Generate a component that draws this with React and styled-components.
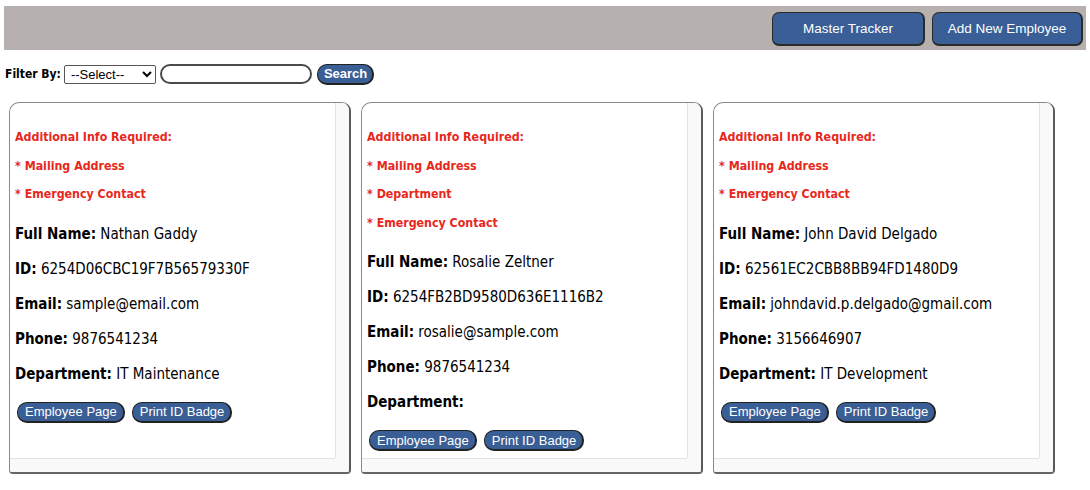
import React from "react";
import styled, { createGlobalStyle } from "styled-components";

const blue = "#3a5e96";
const cardFont = `"DejaVu Sans Condensed", "DejaVu Sans", sans-serif`;
const btnFont = `"Liberation Sans", Arial, sans-serif`;

const GlobalStyle = createGlobalStyle`
  body {
    margin: 0;
    background: #fff;
    font-family: ${cardFont};
    color: #000;
  }
`;

const Page = styled.div`
  padding: 6px 4px 0;
`;

const Header = styled.div`
  height: 44px;
  background: #b6b1ae;
  display: flex;
  justify-content: flex-end;
  align-items: center;
  gap: 7px;
  padding-right: 3px;
`;

const HeaderButton = styled.button`
  width: ${({ w }) => w}px;
  height: 34px;
  margin-top: 1px;
  background: ${blue};
  color: #fff;
  font-family: ${btnFont};
  font-size: 13.5px;
  border: 1px solid #2a2a2a;
  border-width: 1px 2px 2px 1px;
  border-radius: 7px;
  cursor: pointer;
`;

const FilterBar = styled.div`
  display: flex;
  align-items: center;
  margin-top: 14px;
  padding-left: 1px;
  height: 20px;
`;

const FilterLabel = styled.span`
  font-weight: bold;
  font-size: 12px;
  margin-right: 3px;
`;

const Select = styled.select`
  width: 92px;
  height: 19px;
  font-family: ${btnFont};
  font-size: 13px;
  border: 1px solid #555;
  border-radius: 2px;
  background: #fff;
  padding: 0 0 0 2px;
  margin-right: 4px;
`;

const SearchInput = styled.input`
  box-sizing: border-box;
  width: 152px;
  height: 20px;
  border: 2px solid #4a4a4a;
  border-radius: 10px;
  margin-right: 5px;
  outline: none;
`;

const PillButton = styled.button`
  height: ${({ h }) => h || 21}px;
  background: ${blue};
  color: #fff;
  font-family: ${btnFont};
  font-size: 13px;
  font-weight: ${({ bold }) => (bold ? "bold" : "normal")};
  border: 1px solid #222;
  border-width: 1px 2px 2px 1px;
  border-radius: 10px;
  padding: 0 ${({ pr }) => pr ?? 6}px 0 ${({ pl }) => pl ?? 7}px;
  cursor: pointer;
  line-height: 15px;
`;

const CardRow = styled.div`
  display: flex;
  gap: 10px;
  margin-top: 18px;
  padding-left: 5px;
`;

const Card = styled.div`
  box-sizing: border-box;
  width: 342px;
  height: 372px;
  display: grid;
  grid-template-columns: 1fr 14px;
  grid-template-rows: 1fr 14px;
  overflow: hidden;
  border: 1px solid #8a8a8a;
  border-right: 2px solid #5a5a5a;
  border-bottom: 2px solid #666;
  border-radius: 10px 9px 4px 4px;
  background: #fff;
`;

const Content = styled.div`
  padding: 14px 5px 0;
  overflow: hidden;
`;

const VTrack = styled.div`
  background: #f9f9f9;
  border-left: 1px solid #e3e3e3;
`;

const HTrack = styled.div`
  background: #f9f9f9;
  border-top: 1px solid #e3e3e3;
`;

const Corner = styled.div`
  background: #f9f9f9;
`;

const Note = styled.p`
  margin: 13px 0;
  font-size: 12.3px;
  line-height: 15.5px;
  font-weight: bold;
  color: #e8271b;
  &:last-child {
    margin-bottom: 22px;
  }
`;

const Field = styled.p`
  margin: 16px 0;
  font-size: 15px;
  line-height: 19px;
  white-space: nowrap;
  b {
    font-weight: bold;
  }
`;

const Actions = styled.div`
  display: flex;
  gap: 7px;
  margin-top: 18px;
  padding-left: 2px;
`;

const employees = [
  {
    missing: ["Mailing Address", "Emergency Contact"],
    name: "Nathan Gaddy",
    id: "6254D06CBC19F7B56579330F",
    email: "sample@email.com",
    phone: "9876541234",
    dept: "IT Maintenance",
  },
  {
    missing: ["Mailing Address", "Department", "Emergency Contact"],
    name: "Rosalie Zeltner",
    id: "6254FB2BD9580D636E1116B2",
    email: "rosalie@sample.com",
    phone: "9876541234",
    dept: "",
  },
  {
    missing: ["Mailing Address", "Emergency Contact"],
    name: "John David Delgado",
    id: "62561EC2CBB8BB94FD1480D9",
    email: "johndavid.p.delgado@gmail.com",
    phone: "3156646907",
    dept: "IT Development",
  },
];

const EmployeeCard = ({ e }) => (
  <Card>
    <Content>
      <div>
        <Note>Additional Info Required:</Note>
        {e.missing.map((m) => (
          <Note key={m}>* {m}</Note>
        ))}
      </div>
      <Field>
        <b>Full Name:</b> {e.name}
      </Field>
      <Field>
        <b>ID:</b> {e.id}
      </Field>
      <Field>
        <b>Email:</b> {e.email}
      </Field>
      <Field>
        <b>Phone:</b> {e.phone}
      </Field>
      <Field>
        <b>Department:</b> {e.dept}
      </Field>
      <Actions>
        <PillButton>Employee Page</PillButton>
        <PillButton>Print ID Badge</PillButton>
      </Actions>
    </Content>
    <VTrack />
    <HTrack />
    <Corner />
  </Card>
);

export default function App() {
  return (
    <Page>
      <GlobalStyle />
      <Header>
        <HeaderButton w={153}>Master Tracker</HeaderButton>
        <HeaderButton w={151}>Add New Employee</HeaderButton>
      </Header>
      <FilterBar>
        <FilterLabel>Filter By:</FilterLabel>
        <Select defaultValue="">
          <option value="">--Select--</option>
          <option value="name">Name</option>
          <option value="id">ID</option>
          <option value="dept">Department</option>
        </Select>
        <SearchInput type="text" />
        <PillButton bold h={21} pl={6} pr={5}>
          Search
        </PillButton>
      </FilterBar>
      <CardRow>
        {employees.map((e) => (
          <EmployeeCard key={e.id} e={e} />
        ))}
      </CardRow>
    </Page>
  );
}
